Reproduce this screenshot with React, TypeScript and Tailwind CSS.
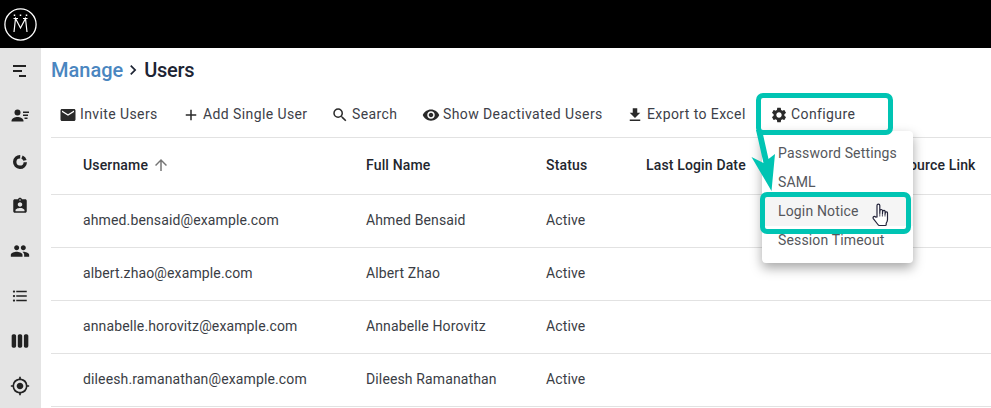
import React from "react";
import {
  MdEmail,
  MdAdd,
  MdSearch,
  MdVisibility,
  MdFileDownload,
  MdSettings,
  MdArrowUpward,
  MdChevronRight,
  MdAssignmentInd,
  MdPeople,
  MdFormatListBulleted,
  MdViewWeek,
  MdGpsFixed,
} from "react-icons/md";

const users = [
  { email: "ahmed.bensaid@example.com", name: "Ahmed Bensaid" },
  { email: "albert.zhao@example.com", name: "Albert Zhao" },
  { email: "annabelle.horovitz@example.com", name: "Annabelle Horovitz" },
  { email: "dileesh.ramanathan@example.com", name: "Dileesh Ramanathan" },
];

const actions = [
  { label: "Invite Users", icon: MdEmail, width: "w-[98px]" },
  { label: "Add Single User", icon: MdAdd, width: "w-[124px]" },
  { label: "Search", icon: MdSearch, width: "w-[66px]" },
  { label: "Show Deactivated Users", icon: MdVisibility, width: "w-[179px]" },
  { label: "Export to Excel", icon: MdFileDownload, width: "w-[119px]" },
];

const menu = ["Password Settings", "SAML", "Login Notice", "Session Timeout"];

function Logo() {
  return (
    <svg width="33" height="33" viewBox="0 0 33 33" fill="none" stroke="white">
      <circle cx="16.5" cy="16.5" r="15.6" strokeWidth="1.3" />
      <path d="M10 24 L11.5 10.5 L16.5 20 L21.5 10.5 L23 24" strokeWidth="1.2" />
      <path d="M9.5 10.5h4.5M19 10.5h4.5" strokeWidth="1.2" />
      <path d="M10.5 6.5v1.6M16.5 6.5v1.6M22.5 6.5v1.6" strokeWidth="1.5" />
    </svg>
  );
}

function SegmentIcon() {
  return (
    <svg width="18" height="18" viewBox="0 0 18 18" fill="#222">
      <rect x="2" y="3" width="13" height="2" />
      <rect x="2" y="8" width="9" height="2" />
      <rect x="8" y="13" width="7" height="2" />
    </svg>
  );
}

function UserListIcon() {
  return (
    <svg width="18" height="18" viewBox="0 0 18 18" fill="#222">
      <circle cx="6.5" cy="5.5" r="3" />
      <path d="M0.5 14c0-2.6 3.5-4 6-4s6 1.4 6 4v0.5h-12z" />
      <rect x="12" y="4.5" width="6" height="1.5" />
      <rect x="12" y="7.5" width="5" height="1.5" />
      <rect x="13.5" y="10.5" width="3" height="1.5" />
    </svg>
  );
}

function RingIcon() {
  return (
    <svg width="18" height="18" viewBox="0 0 18 18" fill="none" stroke="#222" strokeWidth="3.4">
      <path d="M9.2 3.7 A5.3 5.3 0 1 0 14.3 9.2" />
      <path d="M11 4 A5.3 5.3 0 0 1 14 7.4" />
    </svg>
  );
}

function HandCursor() {
  return (
    <svg width="20" height="25" viewBox="0 0 19 25" fill="white" stroke="#23233a" strokeWidth="1.2" strokeLinejoin="round">
      <path d="M5.5 14V2.5a1.4 1.4 0 0 1 2.8 0V10l0.2-2.6a1.3 1.3 0 0 1 2.5 0.1V10.5l0.2-2a1.2 1.2 0 0 1 2.4 0.2v2.3l0.2-1.2a1.1 1.1 0 0 1 2.2 0.2v6.5c0 1.6-0.6 2.7-1.3 3.8v1.2c0 .6-.3 1-.9 1H8c-.8 0-1.2-.3-1.6-1L1.8 15.6c-.5-.9-.2-1.7.5-2 .7-.3 1.5 0 2 .6z" />
      <path d="M8.3 10v3.5M10.9 10.5v3M13.5 11v2.5" fill="none" strokeWidth="0.8" />
    </svg>
  );
}

function Sidebar() {
  return (
    <aside className="flex w-[41px] shrink-0 flex-col items-center bg-[#e4e4e4] pr-[1px] pt-[14px] text-[#222]">
      <div className="flex h-[18px] items-center"><SegmentIcon /></div>
      <div className="mt-[27px] flex h-[18px] items-center"><UserListIcon /></div>
      <div className="mt-[28px] flex h-[18px] items-center"><RingIcon /></div>
      <MdAssignmentInd size={18} className="mt-[26px]" />
      <MdPeople size={20} className="mt-[26px]" />
      <MdFormatListBulleted size={18} className="mt-[26px]" />
      <MdViewWeek size={20} className="mt-[26px]" />
      <MdGpsFixed size={20} className="mt-[25px]" />
    </aside>
  );
}

export default function App() {
  return (
    <div
      className="relative h-[408px] w-[991px] overflow-hidden bg-white"
      style={{ fontFamily: "Roboto, sans-serif" }}
    >
      <header className="flex h-[48px] items-center bg-black pl-[3.5px]">
        <Logo />
      </header>

      <div className="flex h-[360px]">
        <Sidebar />

        <main className="min-w-0 flex-1 pl-[10px]">
          <h1 className="flex h-[44px] items-center text-[20px] font-medium text-[#1d2433]">
            <span className="text-[#4a86c0]">Manage</span>
            <MdChevronRight size={20} className="shrink-0" />
            <span className="ml-[1px] tracking-[-0.3px]">Users</span>
          </h1>

          <div className="flex h-[46px] items-center border-b border-[#e2e2e2] pl-[8px] text-[14px] tracking-[0.4px] text-[#3d4048]">
            <div className="flex items-center gap-[25px]">
              {actions.map(({ label, icon: Icon, width }) => (
                <div key={label} className={`flex items-center gap-[3px] whitespace-nowrap ${width}`}>
                  <Icon size={18} className="shrink-0 text-[#2a2a2a]" />
                  <span>{label}</span>
                </div>
              ))}
              <div className="flex items-center gap-[3px] whitespace-nowrap">
                <MdSettings size={18} className="shrink-0 text-[#2a2a2a]" />
                <span>Configure</span>
              </div>
            </div>
          </div>

          <div className="grid h-[57px] grid-cols-[283px_180px_100px_238px_1fr] items-center border-b border-[#e2e2e2] pb-[2px] pl-[32px] text-[14px] font-medium tracking-[0.15px] text-[#23262e]">
            <div className="flex items-center gap-[4px]">
              Username
              <MdArrowUpward size={18} className="text-[#757575]" />
            </div>
            <div>Full Name</div>
            <div>Status</div>
            <div>Last Login Date</div>
            <div className="whitespace-nowrap pl-[1px]">Resource Link</div>
          </div>

          {users.map((user) => (
            <div
              key={user.email}
              className="grid h-[53px] grid-cols-[283px_180px_100px_238px_1fr] items-center border-b border-[#e2e2e2] pb-[2px] pl-[32px] text-[14px] tracking-[0.13px] text-[#3a3d45]"
            >
              <div>{user.email}</div>
              <div>{user.name}</div>
              <div>Active</div>
              <div />
              <div />
            </div>
          ))}
        </main>
      </div>

      {/* dropdown */}
      <div className="absolute left-[762px] top-[131px] flex h-[132px] w-[151px] flex-col rounded-[4px] bg-white pt-[8px] text-[14px] tracking-[0.15px] text-[#55575c] shadow-[0_5px_12px_rgba(0,0,0,0.35)]">
        {menu.map((item) => (
          <div
            key={item}
            className={`flex h-[29px] items-center whitespace-nowrap pl-[16px] ${item === "Login Notice" ? "bg-[#f5f5f5]" : ""}`}
          >
            {item}
          </div>
        ))}
      </div>

      {/* annotation: highlight boxes and arrow */}
      <div className="absolute left-[756px] top-[93px] h-[42px] w-[137px] rounded-[7px] border-[5px] border-[#00c4b3]" />
      <div className="absolute left-[760px] top-[192px] h-[42px] w-[151px] rounded-[7px] border-[5px] border-[#00c4b3]" />
      <svg className="absolute left-[750px] top-[130px]" width="30" height="62" viewBox="0 0 30 62" fill="#00c4b3">
        <path d="M6 0 L12 0 L18.5 29 L25 24 L21.5 61 L1.5 27 L13.5 33 Z" />
      </svg>
      <div className="absolute left-[871px] top-[203px]">
        <HandCursor />
      </div>
    </div>
  );
}
